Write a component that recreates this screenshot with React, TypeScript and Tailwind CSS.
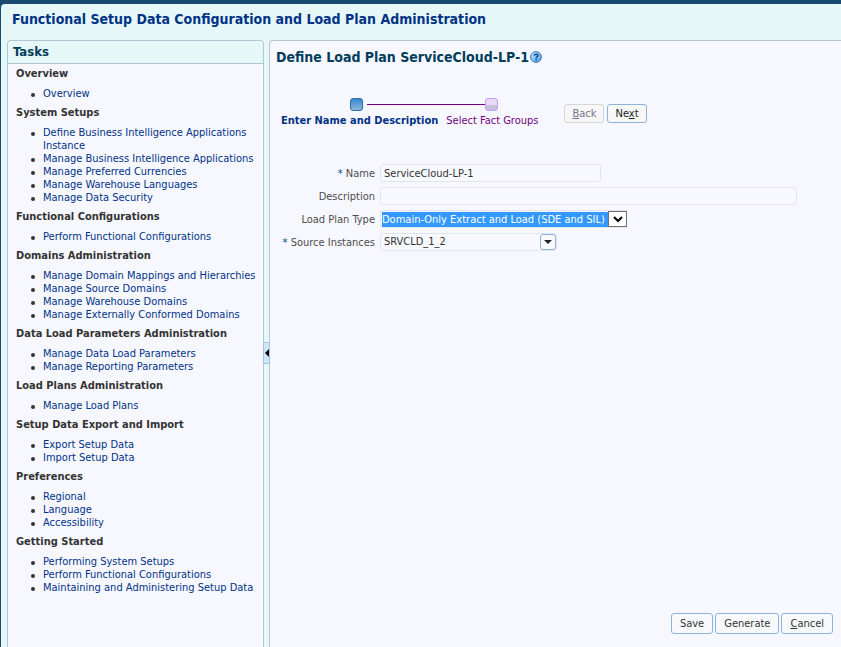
import type { ReactNode } from "react";

type TaskGroup = { title: string; links: string[] };

const groups: TaskGroup[] = [
  { title: "Overview", links: ["Overview"] },
  {
    title: "System Setups",
    links: [
      "Define Business Intelligence Applications Instance",
      "Manage Business Intelligence Applications",
      "Manage Preferred Currencies",
      "Manage Warehouse Languages",
      "Manage Data Security",
    ],
  },
  { title: "Functional Configurations", links: ["Perform Functional Configurations"] },
  {
    title: "Domains Administration",
    links: [
      "Manage Domain Mappings and Hierarchies",
      "Manage Source Domains",
      "Manage Warehouse Domains",
      "Manage Externally Conformed Domains",
    ],
  },
  {
    title: "Data Load Parameters Administration",
    links: ["Manage Data Load Parameters", "Manage Reporting Parameters"],
  },
  { title: "Load Plans Administration", links: ["Manage Load Plans"] },
  { title: "Setup Data Export and Import", links: ["Export Setup Data", "Import Setup Data"] },
  { title: "Preferences", links: ["Regional", "Language", "Accessibility"] },
  {
    title: "Getting Started",
    links: [
      "Performing System Setups",
      "Perform Functional Configurations",
      "Maintaining and Administering Setup Data",
    ],
  },
];

function TasksPanel() {
  return (
    <nav aria-label="Tasks" className="w-[257px] shrink-0 rounded-t border border-b-0 border-[#b3c6d6] bg-[#f7f8ff]">
      <h2 className="h-[23px] rounded-t border-b border-[#b3c6d6] bg-[#e6f7f7] pl-[5px] text-[13px] leading-[21px] font-bold text-[#003d5b]">
        Tasks
      </h2>
      <div className="flex flex-col gap-1.5 pt-[3px] pl-2">
        {groups.map((group) => (
          <section key={group.title}>
            <h3 className="mb-1.5 text-[11px] leading-[14px] font-bold text-[#333333]">{group.title}</h3>
            <ul className="pr-1 pl-[15px]">
              {group.links.map((link) => (
                <li key={link} className="flex gap-2 text-[11px] leading-[13px]">
                  <span className="mt-[6px] size-1 shrink-0 rounded-full bg-[#333333]" />
                  <a href="#" className="text-[#003286]">
                    {link}
                  </a>
                </li>
              ))}
            </ul>
          </section>
        ))}
      </div>
    </nav>
  );
}

function Splitter() {
  return (
    <div className="relative w-[5px] shrink-0">
      <button
        type="button"
        aria-label="Collapse pane"
        className="absolute top-[302px] -left-px flex h-[22px] w-[7px] items-center justify-center border border-[#a3c4e0] bg-[#cfe6f7]"
      >
        <svg width="4" height="8" viewBox="0 0 4 8" className="shrink-0">
          <path d="M4 0v8L0 4z" fill="#000" />
        </svg>
      </button>
    </div>
  );
}

function Train() {
  return (
    <div>
      <div className="flex items-center gap-1 pl-[69px]">
        <span className="size-[13px] shrink-0 rounded-[3px] border border-[#2a6fa8] bg-linear-to-b from-[#2f8ad0] to-[#8fb4d8]" />
        <span className="flex items-center">
          <span className="h-px w-[118px] bg-[#74007c]" />
          <span className="size-[13px] shrink-0 rounded-[3px] border border-[#c3a0f0] bg-linear-to-b from-[#e8d8fa] from-55% to-[#c5c0dc] to-60%" />
        </span>
      </div>
      <div className="mt-[3px] flex gap-2 text-[11px] leading-[14px] whitespace-nowrap">
        <span className="font-bold text-[#003286]">Enter Name and Description</span>
        <a href="#" className="text-[#74007c]">
          Select Fact Groups
        </a>
      </div>
    </div>
  );
}

function ActionButton({ children }: { children: ReactNode }) {
  return (
    <button type="button" className="h-[21px] rounded-[3px] border border-[#8db4d6] bg-[#f8f9fd] px-2 text-[11px] leading-[19px] text-[#333333]">
      {children}
    </button>
  );
}

function Label({ id, required, children }: { id: string; required?: boolean; children: ReactNode }) {
  return (
    <label htmlFor={id} className="text-right text-[11px] leading-[20px] text-[#4c4c4c]">
      {required && <span className="text-[#00467f]">* </span>}
      {children}
    </label>
  );
}

function PlanForm() {
  return (
    <form className="mt-9 grid grid-cols-[99px_minmax(0,1fr)] gap-x-[5px] gap-y-[3px]">
      <Label id="name" required>
        Name
      </Label>
      <input
        id="name"
        defaultValue="ServiceCloud-LP-1"
        className="h-[18px] w-[221px] rounded-[3px] border border-[#dfe7ec] bg-[#f8f9ff] px-[3px] text-[11px] text-[#333333]"
      />
      <Label id="description">Description</Label>
      <input
        id="description"
        className="h-[18px] w-full max-w-[417px] rounded-[3px] border border-[#dfe7ec] bg-[#f8f9ff] px-[3px] text-[11px] text-[#333333]"
      />
      <Label id="type">Load Plan Type</Label>
      <div className="flex h-[18px] w-[247px] items-center rounded-l-[3px] border border-r-0 border-[#dfe7ec] pl-px">
        <select id="type" className="h-[15px] min-w-0 flex-1 appearance-none bg-[#3399ff] text-[11px] leading-[15px] text-white">
          <option>Domain-Only Extract and Load (SDE and SIL)</option>
        </select>
        <span className="pointer-events-none flex h-4 w-[19px] shrink-0 items-center justify-center border border-[#707070] bg-white">
          <svg width="10" height="7" viewBox="0 0 10 7">
            <path d="M1 1l4 4 4-4" fill="none" stroke="#000" strokeWidth="2" />
          </svg>
        </span>
      </div>
      <Label id="source" required>
        Source Instances
      </Label>
      <div className="flex h-[18px] w-[177px] items-center rounded-[3px] border border-[#dfe7ec] bg-[#f8f9ff]">
        <input id="source" defaultValue="SRVCLD_1_2" className="h-4 min-w-0 flex-1 bg-transparent px-[3px] text-[11px] text-[#333333]" />
        <button
          type="button"
          aria-label="Show source instances"
          className="flex h-4 w-4 shrink-0 items-center justify-center rounded-[3px] border border-[#8db4d6] bg-[#f8f9fd]"
        >
          <svg width="8" height="4" viewBox="0 0 8 4" className="shrink-0">
            <path d="M0 0h8L4 4z" fill="#222" />
          </svg>
        </button>
      </div>
    </form>
  );
}

function HelpIcon() {
  return (
    <svg width="12" height="12" viewBox="0 0 12 12" aria-label="Help" role="img">
      <defs>
        <linearGradient id="help" x1="0" y1="0" x2="1" y2="1">
          <stop offset="0" stopColor="#d5ecfd" />
          <stop offset="1" stopColor="#3f97e6" />
        </linearGradient>
      </defs>
      <circle cx="6" cy="6" r="5.4" fill="url(#help)" stroke="#3478bd" />
      <path d="M4.3 4.7C4.3 2.6 7.8 2.6 7.8 4.5 7.8 5.7 6.1 5.7 6.1 7.2" fill="none" stroke="#0b3f8f" strokeWidth="1.4" />
      <path d="M5.4 8.1h1.4v1.3H5.4z" fill="#0b3f8f" />
    </svg>
  );
}

export default function App() {
  return (
    <div className="flex min-h-screen flex-col bg-[#194b70] pt-1 pl-px font-['DejaVu_Sans_Condensed','DejaVu_Sans',sans-serif]">
      <div className="flex flex-1 flex-col rounded-tl bg-[#e6f7f7]">
        <h1 className="h-9 pl-[11px] text-[14px] leading-[30px] font-bold text-[#003286]">
          Functional Setup Data Configuration and Load Plan Administration
        </h1>
        <div className="flex flex-1 pl-1.5">
          <TasksPanel />
          <Splitter />
          <main className="flex min-w-0 flex-1 flex-col rounded-tl border-t border-l border-[#b3c6d6] bg-[#f7f8ff] pt-[7px] pr-2 pb-[13px] pl-1.5">
            <div className="flex items-center gap-px">
              <h2 className="text-[14px] leading-[18px] font-bold text-[#003d5b]">Define Load Plan ServiceCloud-LP-1</h2>
              <HelpIcon />
            </div>
            <div className="mt-8 flex items-start gap-[26px] pl-[5px]">
              <Train />
              <div className="mt-1.5 flex gap-[3px]">
                <button
                  type="button"
                  disabled
                  className="h-[19px] rounded-[3px] border border-[#d5d7da] bg-[#f7f7f7] px-[7px] text-[11px] leading-[17px] text-[#737387]"
                >
                  <u>B</u>ack
                </button>
                <button
                  type="button"
                  className="h-[19px] rounded-[3px] border border-[#8db4d6] bg-[#f7f7f7] px-[7px] text-[11px] leading-[17px] text-[#222222]"
                >
                  Ne<u>x</u>t
                </button>
              </div>
            </div>
            <PlanForm />
            <div className="mt-auto flex justify-end gap-[2px]">
              <ActionButton>Save</ActionButton>
              <ActionButton>Generate</ActionButton>
              <ActionButton>
                <u>C</u>ancel
              </ActionButton>
            </div>
          </main>
        </div>
      </div>
    </div>
  );
}
